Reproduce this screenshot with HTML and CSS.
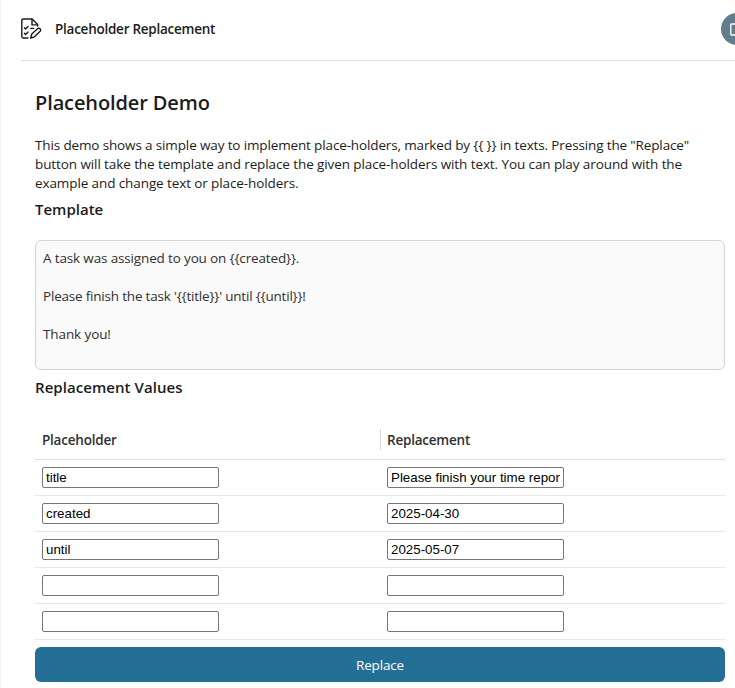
FILE: index.html
```html
<!DOCTYPE html>
<html lang="en">
<head>
<meta charset="utf-8">
<title>Placeholder Replacement</title>
<link rel="stylesheet" href="styles.css">
</head>
<body>
<div class="page">
  <header class="header">
    <svg class="header-icon" width="22" height="22" viewBox="0 0 22 22" fill="none" stroke="#1c1c1c" stroke-width="1.4" stroke-linecap="round" stroke-linejoin="round">
      <path d="M16.6 8V6.6L11.2 1H2.2Q.8 1 .8 2.4V18.6Q.8 20 2.2 20H7"/>
      <path d="M11 1.4V6.9H16.4"/>
      <path d="M3.4 9.7L4.6 10.9L7 8.5M3.4 15.2L4.6 16.4L7 14M9.8 10.4H12.6"/>
      <path d="M9.6 20L10.8 16L16.8 10.5Q18.1 9.8 19.3 10.9Q20.2 12.1 19.2 13.3L13.4 18.8Z"/>
    </svg>
    <span class="header-title">Placeholder Replacement</span>
    <div class="avatar">
      <svg width="16" height="16" viewBox="0 0 16 16" fill="none" stroke="#fff" stroke-width="1.3"><rect x="1.8" y="3" width="12" height="11" rx="1"/></svg>
    </div>
  </header>
  <main class="content">
    <h1>Placeholder Demo</h1>
    <p class="intro"><span class="l1">This demo shows a simple way to implement place-holders, marked by {{ }} in texts. Pressing the "Replace"</span><br><span class="l2">button will take the template and replace the given place-holders with text. You can play around with the</span><br><span class="l3">example and change text or place-holders.</span></p>
    <h2>Template</h2>
    <div class="template"><span class="t1">A task was assigned to you on {{created}}.</span>

<span class="t2">Please finish the task '{{title}}' until {{until}}!</span>

<span class="t3">Thank you!</span></div>
    <h2 class="values-title">Replacement Values</h2>
    <div class="table">
      <div class="row head"><div class="th">Placeholder</div><div class="th second">Replacement</div></div>
      <div class="row"><input value="title"><input value="Please finish your time report"></div>
      <div class="row"><input value="created"><input value="2025-04-30"></div>
      <div class="row"><input value="until"><input value="2025-05-07"></div>
      <div class="row"><input><input></div>
      <div class="row"><input><input></div>
    </div>
    <button class="replace">Replace</button>
  </main>
</div>
</body>
</html>
```
FILE: styles.css
```css
* { box-sizing: border-box; }
body {
  margin: 0;
  background: #fff;
  color: #1c1c1c;
  font: 13.5px/19px "Open Sans", "Noto Sans", sans-serif;
  overflow: hidden;
}
.page { height: 688px; border-left: 1px solid #f0f0f0; overflow: hidden; }
.header {
  display: flex;
  align-items: center;
  height: 61px;
  margin-left: 20px;
  padding-bottom: 2px;
  border-bottom: 1px solid #dee0e3;
}
.header-icon { flex: none; margin-right: 12px; }
.header-title { font-size: 13.5px; font-weight: 600; letter-spacing: -.25px; white-space: nowrap; }
.avatar {
  display: flex;
  align-items: center;
  flex: none;
  width: 32px;
  height: 32px;
  margin-left: auto;
  margin-right: -18px;
  padding-left: 8px;
  border-radius: 50%;
  background: #647d8c;
}
.content { padding: 29px 10px 0 34px; }
h1 { margin: 0 0 20px; font-size: 20px; line-height: 26px; font-weight: 600; letter-spacing: -.12px; }
.intro { margin: 0; white-space: nowrap; }
.l1 { letter-spacing: -.137px; }
.l2 { letter-spacing: -.095px; }
.l3 { letter-spacing: -.1px; }
.t1 { letter-spacing: -.15px; }
.t2 { letter-spacing: -.2px; }
.t3 { letter-spacing: -.1px; }
h2 { margin: 6px 0 0; font-size: 15px; line-height: 20px; font-weight: 600; }
.template {
  height: 130px;
  margin-top: 21px;
  padding: 8px 7px;
  border: 1px solid #d5d5d5;
  border-radius: 6px;
  background: #fafafa;
  color: #303030;
  white-space: pre;
}
.values-title { margin-top: 7px; letter-spacing: .06px; }
.table { margin-top: 23px; }
.row {
  display: grid;
  grid-template-columns: 1fr 1fr;
  align-items: center;
  height: 36px;
  border-bottom: 1px solid #e9e9e9;
}
.head { height: 40px; border-bottom-color: #dae2e8; color: #303030; font-weight: 600; letter-spacing: -.22px; }
.th { height: 21px; margin-bottom: 1px; padding: 2px 7px 0; }
.second { border-left: 1px solid #d8dadd; padding-left: 6px; }
input {
  width: 177px;
  height: 21px;
  margin: 0 0 0 7px;
  padding: 0 3px;
  border: 1px solid #767676;
  border-radius: 2px;
  background: #fff;
  color: #000;
  font: 13.333px "Liberation Sans", sans-serif;
}
.replace {
  display: block;
  width: 100%;
  height: 35px;
  margin-top: 7px;
  padding: 2px 0 0;
  border: 0;
  border-radius: 6px;
  background: #246f96;
  color: #fff;
  font: 13.5px/33px "Open Sans", sans-serif;
  letter-spacing: -.15px;
}
```
